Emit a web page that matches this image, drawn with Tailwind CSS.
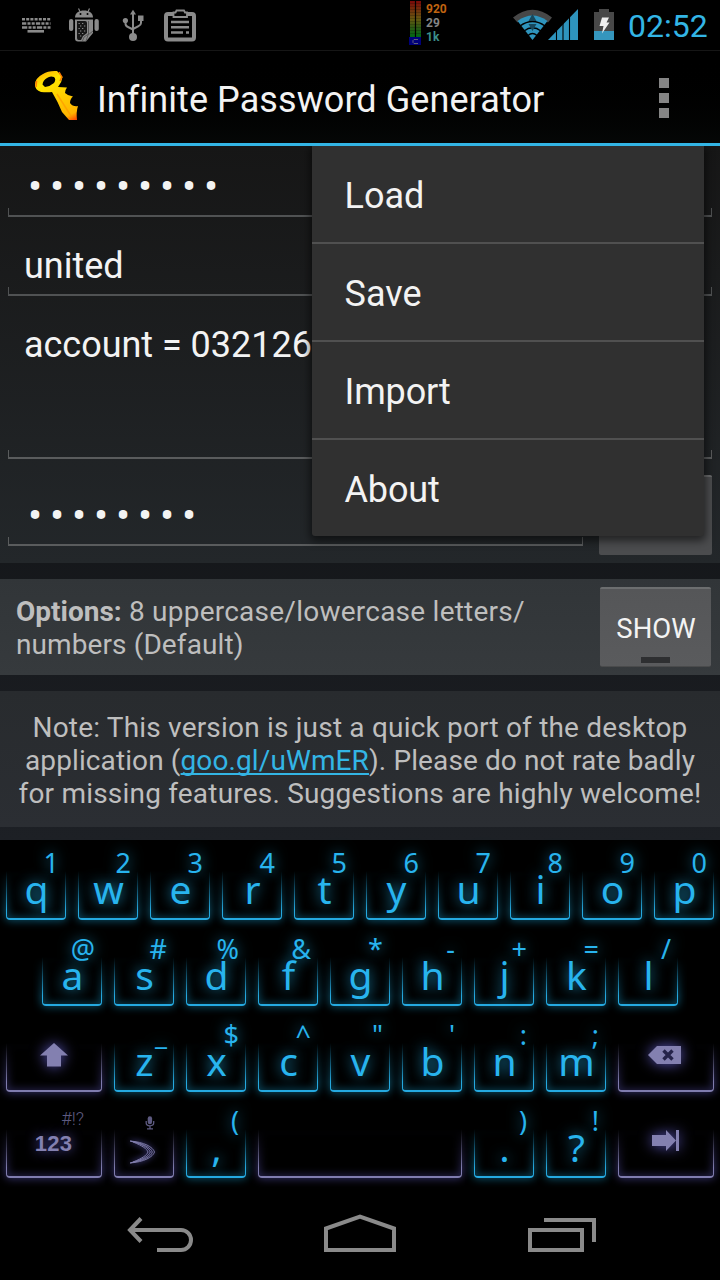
<!DOCTYPE html>
<html lang="en">
<head>
<meta charset="utf-8">
<title>Infinite Password Generator</title>
<script src="https://cdn.jsdelivr.net/npm/@tailwindcss/browser@4"></script>
</head>
<body class="bg-black">
<div class="w-[720px] h-[1280px] overflow-hidden flex flex-col bg-black font-['Roboto',sans-serif] text-[#f3f3f3]">

  <!-- Status bar -->
  <div class="h-[51px] shrink-0 flex items-start border-b border-[#161616]">
    <svg class="ml-[22px] mt-[17px]" width="29" height="17" viewBox="0 0 29 17" stroke="#8a8a8a" fill="none">
      <path d="M0 2.2H28.5" stroke-width="2.6" stroke-dasharray="3 1.2"/>
      <path d="M0 6.5H28.5" stroke-width="2.6" stroke-dasharray="4.3 1.2 3 1.2 3 1.2"/>
      <path d="M0 10.5H28.5" stroke-width="2.4" stroke-dasharray="5.3 1.2 3 1.2 3 1.2"/>
      <path d="M5.5 14.3H22" stroke-width="2.6"/>
    </svg>
    <svg class="ml-[18px] mt-[8px]" width="30" height="34" viewBox="0 0 30 34" fill="#8a8a8a">
      <path d="M6 9.5C6 5 10 2.5 15 2.5S24 5 24 9.500Z"/>
      <path d="M9.500.5L11.200 4M20.500.5L18.800 4" stroke="#8a8a8a" stroke-width="1.200"/>
      <circle cx="11.500" cy="6" r="1" fill="#000"/><circle cx="18.500" cy="6" r="1" fill="#000"/>
      <rect x="0" y="11" width="4.300" height="12" rx="2.100"/><rect x="25.500" y="11" width="4.300" height="12" rx="2.100"/>
      <path d="M6 11.500H24V25L17 33.500H9Q6 33.500 6 30.500Z"/>
      <path d="M8 13H16Q18 13 18 15V25L14 28L12 32H9.500Q8 32 8 30Z" fill="#161616"/>
      <path d="M9.500 15.500h1.300M13 15.500h1.300M11 18h1.300M15 18h1.300M9.500 20.500h1.300M13 20.500h1.300M11 23h1.300M15 23h1.300M9.500 25.500h1.300M13 25.500h1.300M11 28h1.300" stroke="#8a8a8a" stroke-width="1.200"/>
      <path d="M19.500 13V26L15 29L13.500 33M24 23L19 27L17 33" stroke="#444" stroke-width=".7" fill="none"/>
    </svg>
    <svg class="ml-[23px] mt-[9px]" width="23" height="33" viewBox="0 0 23 33" fill="#8a8a8a" stroke="#8a8a8a">
      <path d="M11 27V5M3.500 12V14.500Q3.500 17 6 18L11 20.500M19 9V14Q19 16 16.500 17.200L11 20" fill="none" stroke-width="2"/>
      <path d="M8 5.500L11 .8L14 5.500Z" stroke="none"/><circle cx="3.400" cy="11.500" r="2.600" stroke="none"/><rect x="16" y="6.500" width="5.500" height="5.500" stroke="none"/><circle cx="11" cy="28" r="4" stroke="none"/>
    </svg>
    <svg class="ml-[19px] mt-[9px]" width="32" height="33" viewBox="0 0 32 33" fill="none" stroke="#8a8a8a">
      <rect x="2" y="5" width="28" height="25.500" rx="2" stroke-width="4"/>
      <path d="M9.500 8V3.500H11.500L12.500 1.500H20L21 3.500H23V8Z" fill="#000" stroke-width="1.800"/>
      <path d="M7 13H25M7 18.300H25M7 23.500H19M22 23.500H25" stroke-width="2.600"/>
    </svg>
    <svg class="ml-[213px] mt-px" width="12" height="44" viewBox="0 0 12 44">
      <defs><linearGradient id="m" x2="0" y2="1"><stop stop-color="#7c0909"/><stop offset=".5" stop-color="#665810"/><stop offset=".75" stop-color="#2b5a14"/><stop offset="1" stop-color="#006816"/></linearGradient></defs>
      <rect x="1" y="0" width="11" height="36" fill="url(#m)"/>
      <path d="M6.500 0V36" stroke="#000" stroke-width="1.200"/>
      <path d="M1 2.500H12M1 5.500H12M1 8.500H12M1 11.500H12M1 14.500H12M1 17.500H12M1 20.500H12M1 23.500H12M1 26.500H12M1 29.500H12M1 32.500H12" stroke="#000" stroke-opacity=".2"/>
      <rect y="36" width="12" height="8" fill="#00007a"/>
      <path d="M9 38.500H5L4 39.500V41.500L5 42.500H9" stroke="#777" stroke-width=".8" fill="none"/>
    </svg>
    <div class="ml-[5px] mt-[2px] w-[40px] text-[12px] font-bold leading-[14px]">
      <p class="text-[#c06410]">920</p><p class="text-[#858585]">29</p><p class="text-[#3b8f8b]">1k</p>
    </div>
    <svg class="ml-[47px] mt-[9px]" width="39" height="32" viewBox="0 0 39 32">
      <path d="M0 8.500Q19.500-7 39 8.500L35 13.500Q19.500 2 4.500 13.500Z" fill="#474747"/>
      <path d="M4.500 12Q19.500 1 34.500 12L19.500 31Z" fill="#2e94bd"/>
      <path d="M7 17Q19.500 8 32 17M11 22Q19.500 15.500 28 22M15 26.500Q19.500 22.500 24 26.500" stroke="#000" stroke-width="1.300" fill="none"/>
      <path d="M19.500 5L23.500 12H15.500ZM19.500 22L15.500 15H23.500Z" fill="#18485c"/>
    </svg>
    <svg class="-ml-[4px] mt-[9px]" width="30" height="32" viewBox="0 0 30 32">
      <path d="M0 31L30 0V31Z" fill="#2e94bd"/><path d="M8.500 15V31M15 10V31M21.500 4V31" stroke="#000" stroke-width="1.100"/>
    </svg>
    <svg class="ml-[16px] mt-[9px]" width="20" height="31" viewBox="0 0 20 31">
      <path d="M0 3H5V0H15V3H20V31H0Z" fill="#484848"/><path d="M0 22H20V31H0Z" fill="#3596bd"/>
      <path d="M8 8.500H15L12.500 13.500H15.500L8 24.500L9.500 17H5.500Z" fill="#eee"/>
    </svg>
    <span class="ml-[14px] mt-[6px] leading-[40px] text-[32px] text-[#33b5e5]">02:52</span>
  </div>

  <!-- Action bar -->
  <div class="h-[95px] shrink-0 flex items-start bg-gradient-to-b from-black to-[#050706] border-b-[3px] border-[#33b5e5]">
    <svg class="ml-[33px] mt-[18px]" width="48" height="54" viewBox="0 0 48 54">
      <defs><linearGradient id="k" gradientUnits="userSpaceOnUse" x1="14" y1="0" x2="40" y2="52"><stop stop-color="#ffb400"/><stop offset=".2" stop-color="#ffe600"/><stop offset=".6" stop-color="#ffc800"/><stop offset=".88" stop-color="#ffb400"/><stop offset="1" stop-color="#ff4a00"/></linearGradient></defs>
      <path fill="url(#k)" fill-rule="evenodd" d="M10 5Q15 1.500 24 2L29.500 8Q29 13 25 18L34 18.500Q32 21 32 24Q35 27 40 27.500Q37 30 37 34Q40 38 45 37Q43 43 44 51L36 51L29 43Q25 33 19 23Q14 23.500 8 23Q2 21 2 16Q2 9 10 5ZM14 9Q10 11 9.500 15.500L12 18Q17 17.500 21 14Q23.500 10 21 8Q17 6.500 14 9Z"/>
      <path d="M26 3L28.800 8L27 12M3.500 12L3 18" stroke="#ff7a00" stroke-width="1.500" fill="none"/>
      <path d="M24 25L38 47" stroke="#ff9a00" stroke-width="1.500" opacity=".7"/>
    </svg>
    <h1 class="ml-[16px] mt-[29px] w-[480px] whitespace-nowrap text-[36px] leading-[41px] tracking-[0.08px]">Infinite Password Generator</h1>
    <div class="ml-[82px] mt-[27px] flex flex-col gap-[5px]">
      <i class="block size-[10px] bg-[#858585]"></i><i class="block size-[10px] bg-[#858585]"></i><i class="block size-[10px] bg-[#858585]"></i>
    </div>
  </div>

  <!-- App content -->
  <main class="relative h-[694px] shrink-0 overflow-hidden bg-gradient-to-b from-[#0b0c0d] to-[#1d2025]">
    <section class="h-[417px] px-2 bg-gradient-to-b from-[#161616] to-[#23272a]">
      <div class="h-[71px] pl-[16px] flex flex-col justify-between">
        <div class="h-[62px] flex text-[42px] leading-[81px]" data-dots="9"></div>
        <div class="-ml-[16px] h-[9px] border-x border-b-2 border-[#505253]"></div>
      </div>
      <div class="h-[79px] pl-[16px] flex flex-col justify-between">
        <p class="h-[70px] text-[36px] leading-[99px]">united</p>
        <div class="-ml-[16px] h-[9px] border-x border-b-2 border-[#505253]"></div>
      </div>
      <div class="h-[163px] pl-[16px] flex flex-col justify-between">
        <p class="h-[70px] text-[36px] leading-[99px] tracking-[-0.03px] whitespace-nowrap">account = 032126</p>
        <div class="-ml-[16px] h-[9px] border-x border-b-2 border-[#5a5c5d]"></div>
      </div>
      <div class="flex gap-4">
        <div class="w-[575px] h-[87px] pl-[16px] flex flex-col justify-between">
          <div class="h-[70px] flex text-[42px] leading-[113px]" data-dots="8"></div>
          <div class="-ml-[16px] h-[9px] border-x border-b-2 border-[#5a5c5d]"></div>
        </div>
        <button class="mt-[16px] w-[113px] h-[80px] rounded-[2px] border-t-2 border-[#6a6b6c] bg-[#4b4c4e]"></button>
      </div>
    </section>
    <section class="mt-4 h-[96px] flex items-start bg-gradient-to-b from-[#313538] to-[#363a3d]">
      <p class="w-[600px] pl-4 pt-[16px] text-[28px] leading-[33px] text-[#bebebe] whitespace-nowrap"><b>Options:</b><span class="tracking-[0.24px]"> 8 uppercase/lowercase letters/</span><br><span class="tracking-[0.1px]">numbers (Default)</span></p>
      <button class="mt-2 w-[111px] h-[80px] rounded-[2px] border-t-2 border-b border-t-[#6c6e6f] border-b-[#4a4b4c] bg-gradient-to-b from-[#555658] to-[#5a5b5d] flex flex-col items-center text-[27.5px]">
        <span class="h-[68px] pl-px leading-[80px]">SHOW</span><i class="block w-[29px] h-[6px] bg-[#2e2f31]"></i>
      </button>
    </section>
    <section class="mt-4 h-[136px] pt-[20px] bg-gradient-to-b from-[#282b2e] to-[#2b2e33] text-center text-[28px] leading-[33px] text-[#bebebe] whitespace-nowrap">
      <p class="tracking-[0.19px]">Note: This version is just a quick port of the desktop</p>
      <p class="tracking-[0.11px]">application (<a class="text-[#33b5e5] underline decoration-[2px] underline-offset-[3px] [text-decoration-skip-ink:none]">goo.gl/uWmER</a>). Please do not rate badly</p>
      <p class="tracking-[0.2px]">for missing features. Suggestions are highly welcome!</p>
    </section>

    <!-- Overflow menu -->
    <ul class="absolute left-[312px] top-0 w-[392px] h-[390px] rounded-b-[3px] bg-[#303030] shadow-[0_3px_8px_2px_rgba(0,0,0,0.55)] divide-y-2 divide-[#505050] text-[36px]">
      <li class="h-[98px] pl-[32.5px] leading-[101px]">Load</li>
      <li class="h-[98px] pl-[32.5px] leading-[101px]">Save</li>
      <li class="h-[98px] pl-[32.5px] leading-[101px] tracking-[-0.15px]">Import</li>
      <li class="h-[96px] pl-[32.5px] leading-[101px] tracking-[-0.15px]">About</li>
    </ul>
  </main>

  <!-- Keyboard -->
  <div id="kb" class="h-[344px] shrink-0 flex flex-col bg-black font-['Noto_Sans',sans-serif]"></div>

  <!-- Navigation bar -->
  <nav class="h-[96px] shrink-0 flex items-start bg-black">
    <svg class="ml-[126px] mt-[29px]" width="68" height="40" viewBox="0 0 68 40" fill="none" stroke="#8a8a8a" stroke-width="4">
      <path d="M4 17H55A10 10 0 0 1 55 37H31"/><path d="M15 5.500L4 17L15 28.500"/>
    </svg>
    <svg class="ml-[130px] mt-[29px]" width="72" height="40" viewBox="0 0 72 40" fill="none" stroke="#8a8a8a" stroke-width="4">
      <path d="M2 37V15.500L36 3.500L70 15.500V37Z"/>
    </svg>
    <svg class="ml-[132px] mt-[33px]" width="68" height="36" viewBox="0 0 68 36" fill="none" stroke="#8a8a8a" stroke-width="4">
      <path d="M2 13H54V33H2Z"/><path d="M16 3H66V25"/>
    </svg>
  </nav>
</div>

<script>
document.querySelectorAll('[data-dots]').forEach(el => {
  el.innerHTML = '<span class="w-[22px] flex justify-center">•</span>'.repeat(+el.dataset.dots);
});

const blueFrame = `<div class="absolute inset-x-[-3px] top-[31px] bottom-[-5px] px-[9px] pb-[11px] overflow-hidden [mask-image:linear-gradient(to_bottom,transparent_0%,black_65%)]"><div class="h-full rounded-b-[4px] border-x border-b-2 border-[#25a9e0] shadow-[0_0_8px_1px_rgba(20,130,170,0.6),inset_0_0_9px_1px_rgba(20,130,170,0.5)]"></div></div>`;
const violetFrame = `<div class="absolute inset-x-[-3px] top-[31px] bottom-[-5px] px-[9px] pb-[11px] overflow-hidden [mask-image:linear-gradient(to_bottom,transparent_0%,black_65%)]"><div class="h-full rounded-b-[4px] border-x border-b-2 border-[#7f7cae] shadow-[0_0_8px_1px_rgba(75,70,150,0.65),inset_0_0_9px_1px_rgba(75,70,150,0.5)]"></div></div>`;

const key = (main, hint) => `<div class="relative w-[72px] h-[86px]">${blueFrame}
  <div class="relative h-[35px] leading-[46px] pr-[13px] text-right text-[27px] text-[#28b4ee] [text-shadow:0_0_14px_rgba(30,160,210,0.8)]">${hint}</div>
  <div class="relative leading-[27px] pl-px text-center text-[39px] text-[#28b4ee] [text-shadow:0_0_14px_rgba(30,160,210,1)]">${main}</div></div>`;
const wide = inner => `<div class="relative w-[108px] h-[86px] flex justify-center">${violetFrame}${inner}</div>`;

const shift = wide(`<svg class="relative mt-[31px] h-[24px] w-[28px] overflow-visible [filter:drop-shadow(0_0_7px_#5a55b8)]" viewBox="0 0 28 24"><path d="M14 0L28 12.500H21V23.500H7V12.500H0Z" fill="#8380b0"/></svg>`);
const del = wide(`<svg class="relative mt-[34px] -ml-[3px] h-[18px] w-[33px] overflow-visible [filter:drop-shadow(0_0_7px_#5a55b8)]" viewBox="0 0 33 18"><path d="M0 9L9 0H33V18H9Z" fill="#8380b0"/><path d="M15.500 4.500L24.500 13.500M24.500 4.500L15.500 13.500" stroke="#25234a" stroke-width="3.400"/></svg>`);
const num = wide(`<div class="relative w-full"><div class="h-[28px] leading-[41px] pr-[24px] text-right font-['Roboto'] font-light text-[18px] text-[#5d5a80]">#!?</div><div class="leading-[36px] pr-px text-center font-['Liberation_Sans'] font-bold text-[22px] tracking-[0.3px] text-[#8380b0] [text-shadow:0_0_12px_#5a55b8]">123</div></div>`);
const tab = wide(`<svg class="relative mt-[32px] -ml-[2px] h-[21px] w-[27px] overflow-visible [filter:drop-shadow(0_0_7px_#5a55b8)]" viewBox="0 0 27 21"><path d="M0 5H14V0L24 10.500L14 21V16H0Z" fill="#8380b0"/><path d="M25.500 0V21" stroke="#8380b0" stroke-width="3"/></svg>`);
const swype = `<div class="relative w-[72px] h-[86px] flex flex-col items-start">${violetFrame}
  <svg class="relative mt-[18px] ml-[37px]" width="10" height="14" viewBox="0 0 10 14" fill="none" stroke="#5d5a80" stroke-width="1.300"><rect x="2.700" y=".3" width="4.400" height="8" rx="2.200" fill="#5d5a80" stroke="none"/><path d="M1.200 5V7Q1.200 9.800 5 9.800Q8.700 9.800 8.700 7V5M5 9.800V13M2 12.800H8"/></svg>
  <svg class="relative mt-[8px] ml-[20px] overflow-visible [filter:drop-shadow(0_0_3px_#5a55b8)]" width="28" height="28" viewBox="0 0 28 28" fill="none" stroke="#8380b0" stroke-width=".9"><path d="M2 3C16 4 25 9 26.500 14C25 19 16 24 2 25"/><path d="M2 3C15 5 23 10 24.300 14C23 19 15 22.500 2 25"/><path d="M3 3.300C15 6 21 10.500 22.300 14C21 18 15 21.500 3 24.700"/><path d="M5 4C15 8 19 11 20 14C19 17 15 20 5 24"/></svg></div>`;
const space = `<div class="relative w-[216px] h-[86px]">${violetFrame}</div>`;

const row = (pairs) => pairs.map(p => key(p[0], p[1])).join('');
document.getElementById('kb').innerHTML =
  `<div class="flex">${row(['q1','w2','e3','r4','t5','y6','u7','i8','o9','p0'])}</div>` +
  `<div class="flex pl-[36px]">${row(['a@','s#','d%',['f','&amp;'],'g*','h-','j+','k=','l/'])}</div>` +
  `<div class="flex">${shift}${row(['z_','x$','c^','v"',"b'",'n:','m;'])}${del}</div>` +
  `<div class="flex">${num}${swype}${row([',('])}${space}${row(['.)','?!'])}${tab}</div>`;
</script>
</body>
</html>
